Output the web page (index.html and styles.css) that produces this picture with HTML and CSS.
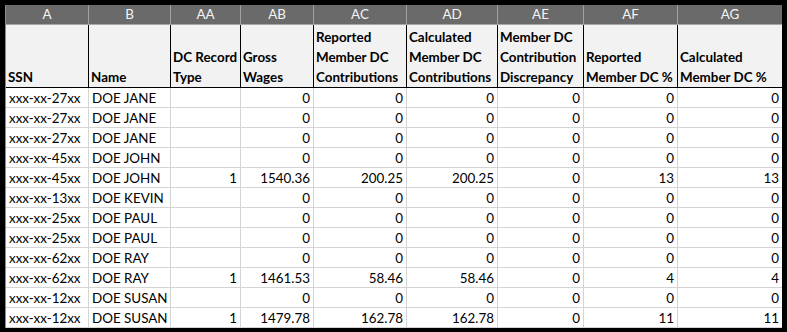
FILE: index.html
```html
<!DOCTYPE html>
<html>
<head>
<meta charset="utf-8">
<link rel="stylesheet" href="styles.css">
</head>
<body>
<div class="sheet">
  <div class="col">A</div><div class="col">B</div><div class="col">AA</div><div class="col">AB</div><div class="col">AC</div><div class="col">AD</div><div class="col">AE</div><div class="col">AF</div><div class="col last">AG</div>

  <div class="fh">SSN</div>
  <div class="fh">Name</div>
  <div class="fh">DC Record<br>Type</div>
  <div class="fh">Gross<br>Wages</div>
  <div class="fh">Reported<br>Member DC<br>Contributions</div>
  <div class="fh">Calculated<br>Member DC<br>Contributions</div>
  <div class="fh">Member DC<br>Contribution<br>Discrepancy</div>
  <div class="fh">Reported<br>Member DC %</div>
  <div class="fh last">Calculated<br>Member DC %</div>

  <div class="c">xxx-xx-27xx</div><div class="c">DOE JANE</div><div class="c n"></div><div class="c n">0</div><div class="c n">0</div><div class="c n">0</div><div class="c n">0</div><div class="c n">0</div><div class="c n last">0</div>
  <div class="c">xxx-xx-27xx</div><div class="c">DOE JANE</div><div class="c n"></div><div class="c n">0</div><div class="c n">0</div><div class="c n">0</div><div class="c n">0</div><div class="c n">0</div><div class="c n last">0</div>
  <div class="c">xxx-xx-27xx</div><div class="c">DOE JANE</div><div class="c n"></div><div class="c n">0</div><div class="c n">0</div><div class="c n">0</div><div class="c n">0</div><div class="c n">0</div><div class="c n last">0</div>
  <div class="c">xxx-xx-45xx</div><div class="c">DOE JOHN</div><div class="c n"></div><div class="c n">0</div><div class="c n">0</div><div class="c n">0</div><div class="c n">0</div><div class="c n">0</div><div class="c n last">0</div>
  <div class="c">xxx-xx-45xx</div><div class="c">DOE JOHN</div><div class="c n">1</div><div class="c n">1540.36</div><div class="c n">200.25</div><div class="c n">200.25</div><div class="c n">0</div><div class="c n">13</div><div class="c n last">13</div>
  <div class="c">xxx-xx-13xx</div><div class="c">DOE KEVIN</div><div class="c n"></div><div class="c n">0</div><div class="c n">0</div><div class="c n">0</div><div class="c n">0</div><div class="c n">0</div><div class="c n last">0</div>
  <div class="c">xxx-xx-25xx</div><div class="c">DOE PAUL</div><div class="c n"></div><div class="c n">0</div><div class="c n">0</div><div class="c n">0</div><div class="c n">0</div><div class="c n">0</div><div class="c n last">0</div>
  <div class="c">xxx-xx-25xx</div><div class="c">DOE PAUL</div><div class="c n"></div><div class="c n">0</div><div class="c n">0</div><div class="c n">0</div><div class="c n">0</div><div class="c n">0</div><div class="c n last">0</div>
  <div class="c">xxx-xx-62xx</div><div class="c">DOE RAY</div><div class="c n"></div><div class="c n">0</div><div class="c n">0</div><div class="c n">0</div><div class="c n">0</div><div class="c n">0</div><div class="c n last">0</div>
  <div class="c">xxx-xx-62xx</div><div class="c">DOE RAY</div><div class="c n">1</div><div class="c n">1461.53</div><div class="c n">58.46</div><div class="c n">58.46</div><div class="c n">0</div><div class="c n">4</div><div class="c n last">4</div>
  <div class="c">xxx-xx-12xx</div><div class="c">DOE SUSAN</div><div class="c n"></div><div class="c n">0</div><div class="c n">0</div><div class="c n">0</div><div class="c n">0</div><div class="c n">0</div><div class="c n last">0</div>
  <div class="c">xxx-xx-12xx</div><div class="c">DOE SUSAN</div><div class="c n">1</div><div class="c n">1479.78</div><div class="c n">162.78</div><div class="c n">162.78</div><div class="c n">0</div><div class="c n">11</div><div class="c n last">11</div>
</div>
</body>
</html>
```

FILE: styles.css
```css
html, body {
  margin: 0;
  padding: 0;
  background: #000;
}
body {
  padding: 5px 0 0 5px;
  font-family: Lato, "Liberation Sans", sans-serif;
  font-size: 13.4px;
  color: #000;
}
.sheet {
  display: grid;
  grid-template-columns: 83px 82px 70px 73px 93px 91px 86px 94px 104px;
  width: max-content;
  border-left: 1px solid #8c8c8c;
}
.sheet > div {
  box-sizing: border-box;
  white-space: nowrap;
  overflow: hidden;
}
.col {
  height: 20px;
  line-height: 19px;
  background: #6a6a6a;
  color: #f4f4f4;
  text-align: center;
  border-right: 1px solid #a0a0a0;
  border-bottom: 1px solid #a8a8a8;
}
.col.last { border-right: none; }
.fh {
  height: 63px;
  background: #f2f2f2;
  font-weight: bold;
  line-height: 20px;
  padding: 0 1px 0 2px;
  border-right: 1px solid #000;
  border-bottom: 1px solid #000;
  display: flex;
  align-items: flex-end;
}
.fh.last { border-right: none; }
.c {
  height: 20px;
  line-height: 20px;
  background: #fff;
  padding: 0 3px;
  border-right: 1px solid #d4d4d4;
  border-bottom: 1px solid #d4d4d4;
}
.c.n { text-align: right; }
.c.last { border-right: none; }
```
